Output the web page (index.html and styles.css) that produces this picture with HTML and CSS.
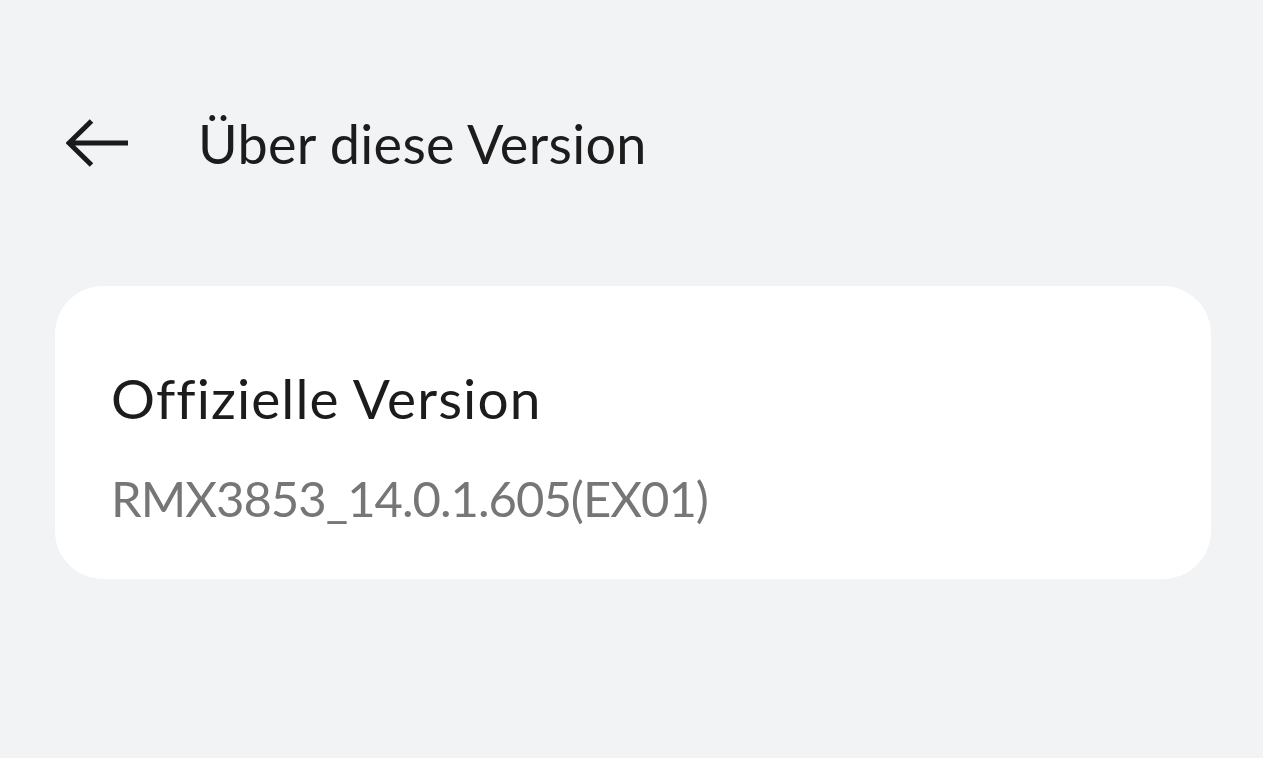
FILE: index.html
```html
<!DOCTYPE html>
<html lang="de">
<head>
<meta charset="utf-8">
<link rel="stylesheet" href="styles.css">
</head>
<body>
<div class="page">
  <header class="topbar">
    <span class="back">
      <svg width="64" height="48" viewBox="0 0 64 48"><path d="M25.5 2 L3 24 L25.5 46 M3 24 H62" fill="none" stroke="#1a1a1a" stroke-width="5" stroke-linecap="butt" stroke-linejoin="miter"/></svg>
    </span>
    <h1 class="title">Über diese Version</h1>
  </header>
  <section class="card">
    <div class="card-title">Offizielle Version</div>
    <div class="card-sub">RMX3853_14.0.1.605(EX01)</div>
  </section>
</div>
</body>
</html>
```
FILE: styles.css
```css
html, body { margin: 0; padding: 0; }
body {
  background: #f2f3f5;
  font-family: Lato, "Noto Sans", sans-serif;
  width: 1263px;
  height: 758px;
  overflow: hidden;
}
.page { padding: 0 52px 0 55px; }
.topbar {
  height: 286px;
  display: flex;
  align-items: flex-start;
  padding-top: 112px;
  box-sizing: border-box;
}
.back { width: 130px; padding-left: 11px; margin-top: 7px; display: block; height: 48px; }
.back svg { display: block; }
.title {
  margin: 0 0 0 2px;
  font-weight: 400;
  font-size: 54px;
  line-height: 64px;
  letter-spacing: 0.3px;
  color: #1c1c1c;
}
.card {
  background: #fff;
  border-radius: 48px;
  height: 293px;
  box-sizing: border-box;
  padding: 80px 58px 0 56px;
}
.card-title { font-size: 55px; line-height: 64px; letter-spacing: 1.1px; color: #1c1c1c; }
.card-sub { font-size: 49px; line-height: 56px; letter-spacing: -1px; color: #767676; margin-top: 40px; }
```
